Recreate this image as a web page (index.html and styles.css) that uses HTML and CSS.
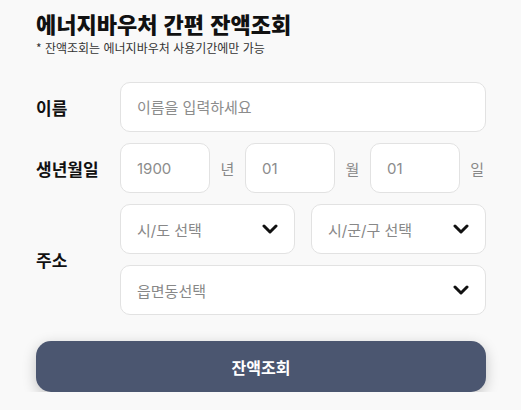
FILE: index.html
```html
<!DOCTYPE html>
<html lang="ko">
<head>
<meta charset="utf-8">
<title>에너지바우처 간편 잔액조회</title>
<link rel="stylesheet" href="styles.css">
</head>
<body>
<main class="page">
  <h1 class="title">에너지바우처 간편 잔액조회</h1>
  <p class="subtitle">* 잔액조회는 에너지바우처 사용기간에만 가능</p>

  <form class="form">
    <div class="row">
      <label class="label">이름</label>
      <input class="field" type="text" placeholder="이름을 입력하세요">
    </div>

    <div class="row">
      <label class="label">생년월일</label>
      <div class="birth">
        <input class="field" type="text" placeholder="1900">
        <span class="unit">년</span>
        <input class="field" type="text" placeholder="01">
        <span class="unit">월</span>
        <input class="field" type="text" placeholder="01">
        <span class="unit unit-last">일</span>
      </div>
    </div>

    <div class="row">
      <label class="label">주소</label>
      <div class="address">
        <div class="select"><span>시/도 선택</span><svg class="chev" viewBox="0 0 16 10" width="16" height="10"><path d="M2 2l6 6 6-6" fill="none" stroke="#111" stroke-width="3" stroke-linecap="round" stroke-linejoin="round"/></svg></div>
        <div class="select"><span>시/군/구 선택</span><svg class="chev" viewBox="0 0 16 10" width="16" height="10"><path d="M2 2l6 6 6-6" fill="none" stroke="#111" stroke-width="3" stroke-linecap="round" stroke-linejoin="round"/></svg></div>
        <div class="select wide"><span>읍면동선택</span><svg class="chev" viewBox="0 0 16 10" width="16" height="10"><path d="M2 2l6 6 6-6" fill="none" stroke="#111" stroke-width="3" stroke-linecap="round" stroke-linejoin="round"/></svg></div>
      </div>
    </div>

    <button class="submit" type="button">잔액조회</button>
  </form>
</main>
</body>
</html>
```

FILE: styles.css
```css
* { box-sizing: border-box; }

html, body {
  margin: 0;
  padding: 0;
  background: #f9f9f9;
}

body {
  font-family: "Noto Sans CJK KR", "Noto Sans", sans-serif;
  color: #111;
}

.page {
  width: 521px;
  padding: 6px 35px 0 36px;
}

.title {
  margin: 0;
  font-size: 22px;
  font-weight: 900;
  line-height: 34px;
  color: #111;
}

.subtitle {
  margin: 0;
  font-size: 12px;
  line-height: 16px;
  color: #333;
}

.form {
  margin-top: 26px;
  display: flex;
  flex-direction: column;
  gap: 11px;
}

.row {
  display: grid;
  grid-template-columns: 84px 1fr;
  align-items: center;
}

.label {
  font-size: 17px;
  font-weight: 700;
  color: #111;
}

.field,
.select {
  height: 50px;
  border: 1px solid #e2e2e2;
  border-radius: 10px;
  background: #fff;
  padding: 0 16px;
  font-family: Inter, "Noto Sans CJK KR", sans-serif;
  font-size: 15px;
  color: #888;
  width: 100%;
  min-width: 0;
  outline: none;
}

.field::placeholder { color: #8c8c8c; }

.birth {
  display: flex;
  align-items: center;
}

.birth .field { flex: 1; }

.unit {
  flex: 0 0 35px;
  text-align: center;
  font-size: 15px;
  color: #888;
}

.unit-last {
  flex-basis: 26px;
  text-align: right;
  padding-right: 2px;
}

.address {
  display: grid;
  grid-template-columns: 1fr 1fr;
  column-gap: 16px;
  row-gap: 11px;
}

.select {
  display: flex;
  align-items: center;
  justify-content: space-between;
}

.select.wide { grid-column: 1 / -1; }

.chev { display: block; }

.submit {
  margin-top: 15px;
  height: 51px;
  width: 100%;
  border: 0;
  border-radius: 15px;
  background: #4b5670;
  color: #fff;
  font-family: "Noto Sans CJK KR", "Noto Sans", sans-serif;
  font-size: 16px;
  font-weight: 700;
  box-shadow: 0 4px 14px rgba(0, 0, 0, 0.22);
}
```
